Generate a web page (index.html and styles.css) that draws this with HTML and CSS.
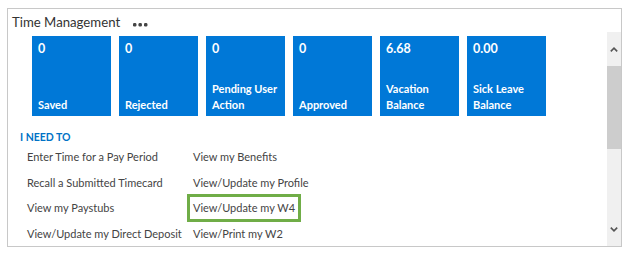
FILE: index.html
```html
<!DOCTYPE html>
<html lang="en">
<head>
    <meta charset="utf-8">
    <title>Time Management</title>
    <link rel="stylesheet" href="styles.css">
</head>
<body>
<div class="panel">
    <div class="panel-head">
        <span class="title">Time Management</span>
        <svg class="more" width="15" height="4" viewBox="0 0 15 4">
            <rect x="0" y="0" width="3.4" height="3.4" rx="1.2" fill="#444"/>
            <rect x="5.5" y="0" width="3.4" height="3.4" rx="1.2" fill="#444"/>
            <rect x="11" y="0" width="3.4" height="3.4" rx="1.2" fill="#444"/>
        </svg>
    </div>
    <div class="panel-body">
        <div class="content">
            <div class="tiles">
                <div class="tile"><div class="num">0</div><div class="label">Saved</div></div>
                <div class="tile"><div class="num">0</div><div class="label">Rejected</div></div>
                <div class="tile"><div class="num">0</div><div class="label">Pending User Action</div></div>
                <div class="tile"><div class="num">0</div><div class="label">Approved</div></div>
                <div class="tile"><div class="num">6.68</div><div class="label">Vacation Balance</div></div>
                <div class="tile"><div class="num">0.00</div><div class="label">Sick Leave Balance</div></div>
            </div>
            <div class="need">
                <div class="need-title">I NEED TO</div>
                <div class="links">
                    <a href="#">Enter Time for a Pay Period</a>
                    <a href="#">View my Benefits</a>
                    <a href="#">Recall a Submitted Timecard</a>
                    <a href="#">View/Update my Profile</a>
                    <a href="#">View my Paystubs</a>
                    <a href="#" class="marked">View/Update my W4</a>
                    <a href="#">View/Update my Direct Deposit</a>
                    <a href="#">View/Print my W2</a>
                </div>
            </div>
        </div>
        <div class="scrollbar">
            <div class="sb-btn">
                <svg width="8" height="5" viewBox="0 0 8 5"><path d="M0.8 4.4 L4 1.2 L7.2 4.4" fill="none" stroke="#555" stroke-width="1.6"/></svg>
            </div>
            <div class="sb-thumb"></div>
            <div class="sb-track"></div>
            <div class="sb-btn">
                <svg width="8" height="5" viewBox="0 0 8 5"><path d="M0.8 0.6 L4 3.8 L7.2 0.6" fill="none" stroke="#555" stroke-width="1.6"/></svg>
            </div>
        </div>
    </div>
</div>
</body>
</html>
```

FILE: styles.css
```css
* {
    margin: 0;
    padding: 0;
    box-sizing: border-box;
}

body {
    background-color: #FFFFFF;
    font-family: "Segoe UI", Lato, "Open Sans", sans-serif;
    color: #444;
}

.panel {
    margin: 8px 0 0 7px;
    width: 615px;
    height: 239px;
    border: 1px solid #c8c8c8;
    display: flex;
    flex-direction: column;
}

.panel-head {
    height: 23px;
    padding-left: 4px;
    display: flex;
    align-items: center;
}

.title {
    font-size: 13.2px;
    color: #333;
    line-height: 20px;
    padding-top: 3px;
}

.more {
    margin-left: 13px;
    margin-top: 8px;
}

.panel-body {
    flex: 1;
    display: flex;
    min-height: 0;
}

.content {
    flex: 1;
    overflow: hidden;
}

.tiles {
    display: flex;
    gap: 8px;
    padding: 4px 0 0 24px;
}

.tile {
    width: 79px;
    height: 80px;
    background-color: #0078d7;
    color: #FFFFFF;
    padding: 4px 2px 3px 6px;
    display: flex;
    flex-direction: column;
    justify-content: space-between;
    font-weight: 700;
}

.tile .num {
    font-size: 12.5px;
    line-height: 18px;
}

.tile .label {
    font-size: 11px;
    line-height: 16px;
}

.need {
    padding: 13px 0 0 12px;
}

.need-title {
    font-size: 10.5px;
    font-weight: 700;
    color: #0072c6;
    line-height: 16px;
}

.links {
    display: grid;
    grid-template-columns: 166px auto;
    justify-content: start;
    justify-items: start;
    row-gap: 9.5px;
    margin-top: 4px;
    padding-left: 7px;
}

.links a {
    font-size: 11px;
    line-height: 16px;
    color: #444;
    text-decoration: none;
    white-space: nowrap;
}

.links a.marked {
    outline: 3px solid #70ad47;
    outline-offset: 3px;
}

.scrollbar {
    width: 14px;
    background-color: #f0f0f0;
    display: flex;
    flex-direction: column;
}

.sb-btn {
    height: 34px;
    display: flex;
    align-items: center;
    justify-content: center;
}

.sb-thumb {
    height: 83px;
    background-color: #cdcdcd;
}

.sb-track {
    flex: 1;
}
```
